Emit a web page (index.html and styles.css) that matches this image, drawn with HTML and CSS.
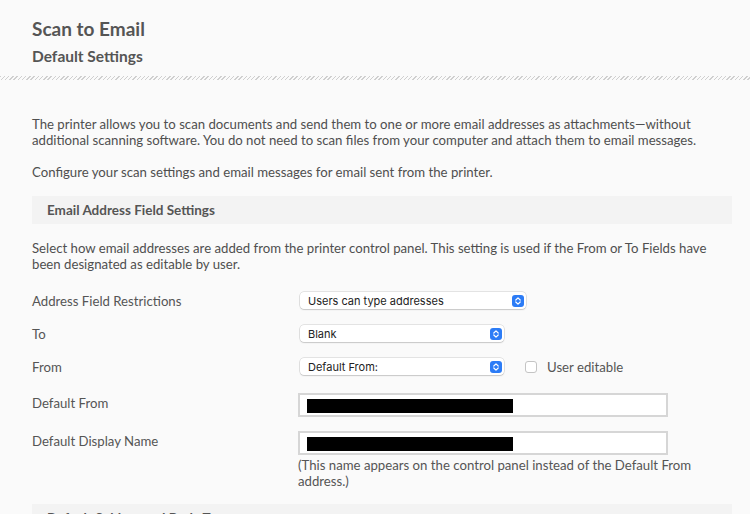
FILE: index.html
```html
<!DOCTYPE html>
<html>
<head>
<meta charset="utf-8">
<title>Scan to Email</title>
<link rel="stylesheet" href="styles.css">
</head>
<body>
<header class="page-head">
  <h1 class="title">Scan to Email</h1>
  <h2 class="subtitle">Default Settings</h2>
</header>
<div class="hatch"></div>
<main class="content">
  <p class="intro">The printer allows you to scan documents and send them to one or more email addresses as attachments—without additional scanning software. You do not need to scan files from your computer and attach them to email messages.</p>
  <p class="intro second">Configure your scan settings and email messages for email sent from the printer.</p>

  <section class="section">
    <h3 class="bar">Email Address Field Settings</h3>
    <p class="desc">Select how email addresses are added from the printer control panel. This setting is used if the From or To Fields have been designated as editable by user.</p>

    <div class="row row-first">
      <span class="label">Address Field Restrictions</span>
      <div class="select wide">
        <span class="sel-text">Users can type addresses</span>
        <svg class="stepper" width="12" height="12" viewBox="0 0 12 12"><rect width="12" height="12" rx="3" fill="#2c7cf6"/><path d="M3.8 5 6 2.9 8.2 5M3.8 7 6 9.1 8.2 7" fill="none" stroke="#fff" stroke-width="1.2" stroke-linecap="round" stroke-linejoin="round"/></svg>
      </div>
    </div>

    <div class="row">
      <span class="label">To</span>
      <div class="select">
        <span class="sel-text">Blank</span>
        <svg class="stepper" width="12" height="12" viewBox="0 0 12 12"><rect width="12" height="12" rx="3" fill="#2c7cf6"/><path d="M3.8 5 6 2.9 8.2 5M3.8 7 6 9.1 8.2 7" fill="none" stroke="#fff" stroke-width="1.2" stroke-linecap="round" stroke-linejoin="round"/></svg>
      </div>
    </div>

    <div class="row">
      <span class="label">From</span>
      <div class="select">
        <span class="sel-text">Default From:</span>
        <svg class="stepper" width="12" height="12" viewBox="0 0 12 12"><rect width="12" height="12" rx="3" fill="#2c7cf6"/><path d="M3.8 5 6 2.9 8.2 5M3.8 7 6 9.1 8.2 7" fill="none" stroke="#fff" stroke-width="1.2" stroke-linecap="round" stroke-linejoin="round"/></svg>
      </div>
      <span class="checkbox"></span>
      <span class="check-label">User editable</span>
    </div>

    <div class="row row-input">
      <span class="label">Default From</span>
      <div class="text-input"><span class="redact"></span></div>
    </div>

    <div class="row row-input second-input">
      <span class="label">Default Display Name</span>
      <div class="text-input"><span class="redact"></span></div>
    </div>
    <p class="help">(This name appears on the control panel instead of the Default From address.)</p>
  </section>

  <section class="section">
    <h3 class="bar">Default Subject and Body Text</h3>
  </section>
</main>
</body>
</html>
```
FILE: styles.css
```css
html, body {
  margin: 0;
  padding: 0;
  background: #fafafa;
}
body {
  font-family: Lato, "Open Sans", sans-serif;
  color: #4f4f4f;
  height: 514px;
  overflow: hidden;
}
.page-head {
  padding: 17px 32px 0;
}
.title {
  margin: 0;
  font-size: 19px;
  line-height: 24px;
  font-weight: 700;
  color: #555;
}
.subtitle {
  margin: 6px 0 0;
  font-size: 15.5px;
  line-height: 18px;
  font-weight: 700;
  color: #555;
}
.hatch {
  margin-top: 11px;
  height: 4px;
  background: repeating-linear-gradient(135deg, #cfcfcf 0 1px, transparent 1px 3px);
}
.content {
  padding: 36px 18px 0 32px;
}
.intro {
  margin: 0;
  font-size: 13.2px;
  line-height: 16px;
}
.intro.second {
  margin-top: 16px;
}
.section {
  margin-top: 16px;
}
.bar {
  margin: 0;
  height: 28px;
  background: #f3f3f3;
  padding-left: 15px;
  font-size: 13.5px;
  line-height: 28px;
  font-weight: 700;
  color: #555;
}
.desc {
  margin: 16px 0 0;
  font-size: 13.2px;
  line-height: 16px;
}
.row {
  display: flex;
  align-items: center;
  height: 17px;
  margin-top: 16px;
}
.row-first {
  margin-top: 20px;
}
.row-input {
  align-items: flex-start;
  height: 24px;
  margin-top: 18px;
}
.row-input .label {
  padding-top: 2px;
  line-height: 16px;
}
.second-input {
  margin-top: 14px;
}
.label {
  width: 266px;
  flex: none;
  font-size: 13.2px;
  color: #555;
}
.select {
  box-sizing: border-box;
  margin-left: 2px;
  width: 204px;
  height: 17px;
  display: flex;
  align-items: center;
  justify-content: space-between;
  padding: 0 2px 0 8px;
  background: #fff;
  border-radius: 4px;
  box-shadow: 0 0 0 0.5px rgba(0, 0, 0, 0.18), 0 1px 1.5px rgba(0, 0, 0, 0.12);
  font-family: Inter, Roboto, sans-serif;
  font-size: 11px;
  color: #222;
}
.select.wide {
  width: 226px;
}
.stepper {
  flex: none;
  display: block;
}
.checkbox {
  box-sizing: border-box;
  margin-left: 21px;
  width: 12px;
  height: 12px;
  border: 1px solid #c4c4c4;
  border-radius: 3px;
  background: #fff;
}
.check-label {
  margin-left: 10px;
  font-size: 13.2px;
  color: #555;
}
.text-input {
  box-sizing: border-box;
  width: 370px;
  height: 24px;
  border: 2px solid #d6d6d6;
  background: #fff;
  padding: 4px 0 0 7px;
}
.redact {
  display: block;
  width: 206px;
  height: 14px;
  background: #000;
}
.help {
  margin: 2px 0 0 266px;
  font-size: 13.2px;
  line-height: 16px;
  color: #555;
}
.section + .section {
  margin-top: 15px;
}
```
